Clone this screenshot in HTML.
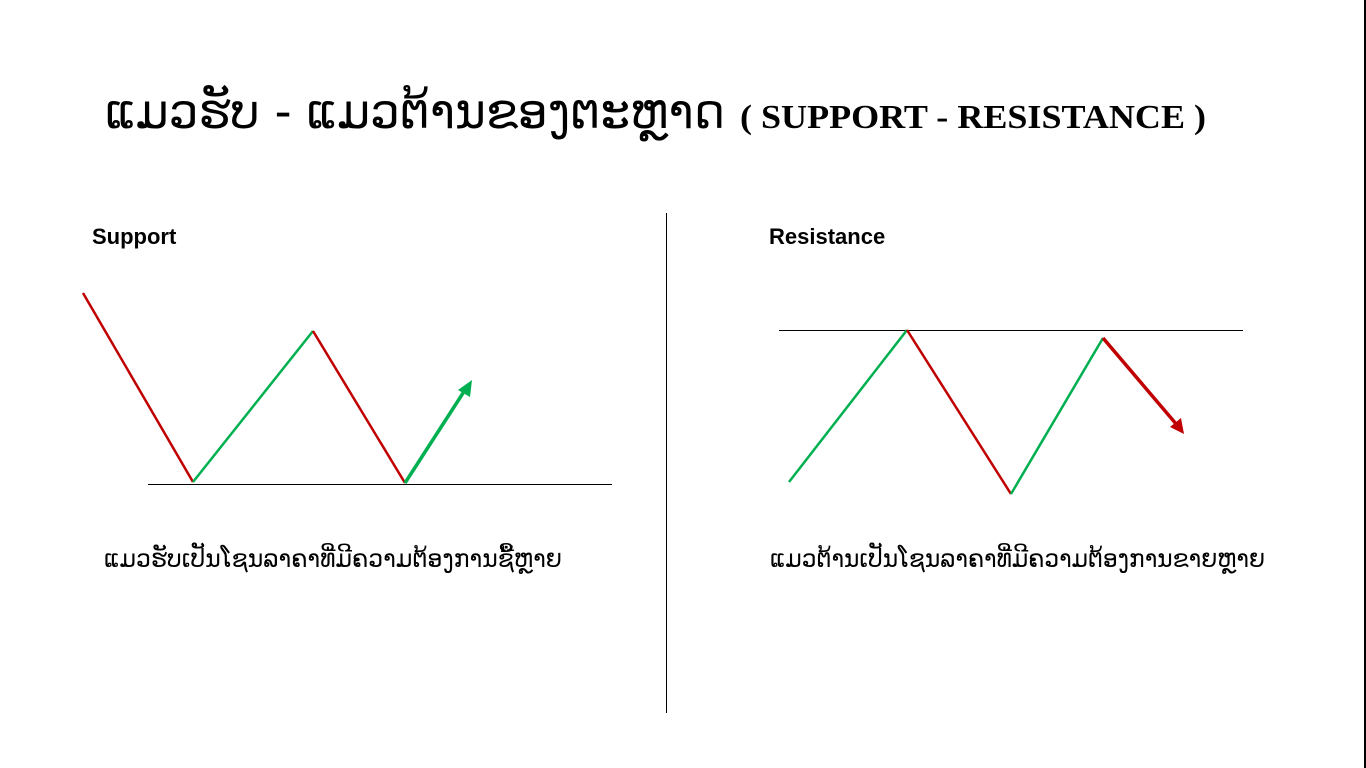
<!DOCTYPE html>
<html><head><meta charset="utf-8"><style>
html,body{margin:0;padding:0;background:#fff;width:1366px;height:768px;overflow:hidden}
svg{display:block}
</style></head><body>
<svg width="1366" height="768" xmlns="http://www.w3.org/2000/svg">
<rect x="1364" y="0" width="2" height="768" fill="#000"/>
<text x="105" y="128" font-family="'DejaVu Sans','Liberation Sans',sans-serif" font-size="48" textLength="620" lengthAdjust="spacingAndGlyphs" fill="#000">ແມວຮັບ - ແມວຕ້ານຂອງຕະຫຼາດ</text>
<text x="740" y="128" font-family="'Liberation Serif',serif" font-weight="bold" font-size="34" textLength="466" lengthAdjust="spacingAndGlyphs" fill="#000">( SUPPORT - RESISTANCE )</text>
<text x="92" y="244" font-family="'Liberation Sans',sans-serif" font-weight="bold" font-size="22" fill="#000">Support</text>
<text x="769" y="244" font-family="'Liberation Sans',sans-serif" font-weight="bold" font-size="22" fill="#000">Resistance</text>
<g shape-rendering="crispEdges">
<line x1="666.5" y1="213" x2="666.5" y2="713" stroke="#000" stroke-width="1"/>
<line x1="148" y1="484.5" x2="612" y2="484.5" stroke="#000" stroke-width="1"/>
<line x1="779" y1="330.5" x2="1243" y2="330.5" stroke="#000" stroke-width="1"/>
</g>
<!-- support -->
<polyline points="83,293 193,482" stroke="#c00000" stroke-width="2.5" fill="none"/>
<polyline points="193,482 313,331" stroke="#00b050" stroke-width="2.5" fill="none"/>
<polyline points="313,331 405,483" stroke="#c00000" stroke-width="2.5" fill="none"/>
<line x1="405" y1="483" x2="465" y2="390" stroke="#00b050" stroke-width="3.5"/>
<polygon points="472,380 458,390 470,397" fill="#00b050"/>
<!-- resistance -->
<polyline points="789,482 907,330" stroke="#00b050" stroke-width="2.5" fill="none"/>
<polyline points="907,330 1011,494" stroke="#c00000" stroke-width="2.5" fill="none"/>
<polyline points="1011,494 1103,338" stroke="#00b050" stroke-width="2.5" fill="none"/>
<line x1="1103" y1="338" x2="1177" y2="425" stroke="#c00000" stroke-width="3.5"/>
<polygon points="1184,434 1170,427 1181,418" fill="#c00000"/>
<text x="104" y="567" font-family="'DejaVu Sans','Liberation Sans',sans-serif" font-size="25" textLength="458" lengthAdjust="spacingAndGlyphs" fill="#000">ແມວຮັບເປັນໂຊນລາຄາທີ່ມີຄວາມຕ້ອງການຊື້ຫຼາຍ</text>
<text x="770" y="567" font-family="'DejaVu Sans','Liberation Sans',sans-serif" font-size="25" textLength="495" lengthAdjust="spacingAndGlyphs" fill="#000">ແມວຕ້ານເປັນໂຊນລາຄາທີ່ມີຄວາມຕ້ອງການຂາຍຫຼາຍ</text>
</svg>
</body></html>
